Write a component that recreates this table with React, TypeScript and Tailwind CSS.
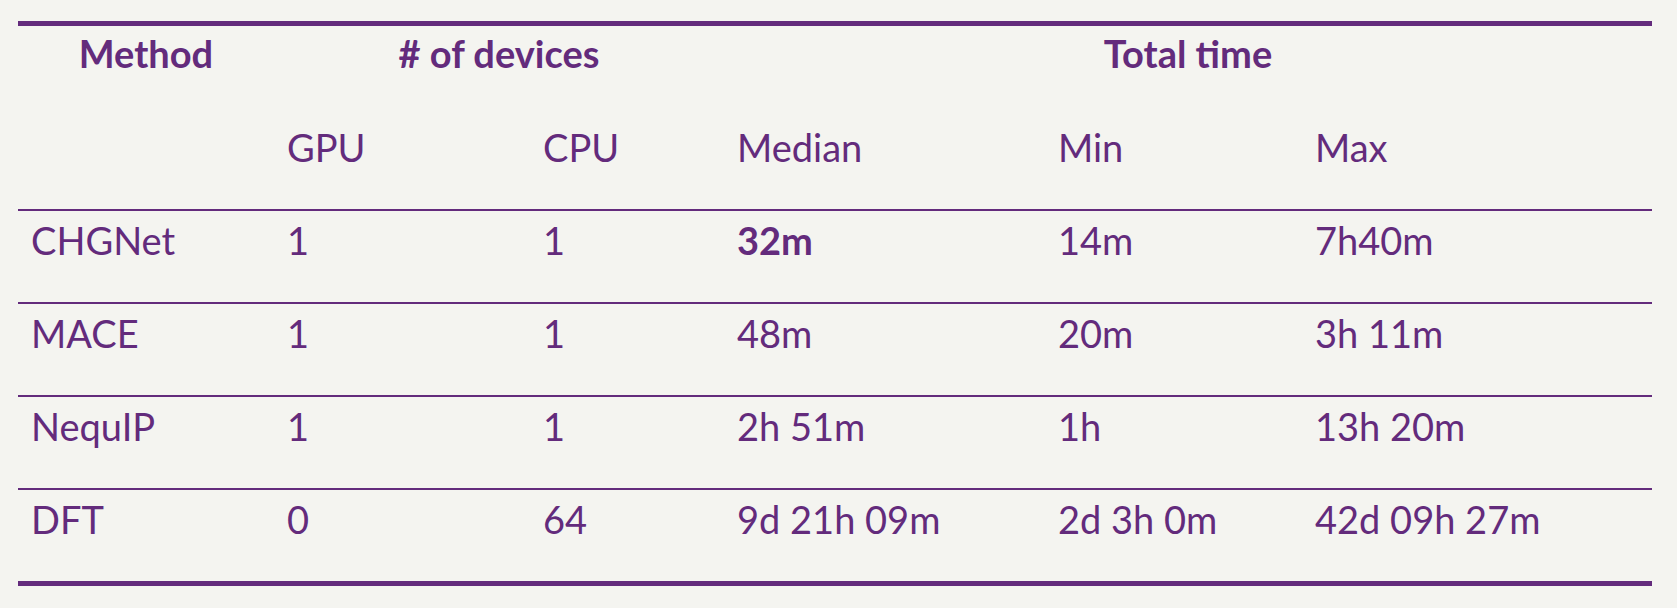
const cols = "grid grid-cols-[256px_256px_194px_321px_257px_1fr]";

type Row = { method: string; gpu: string; cpu: string; median: string; min: string; max: string; best?: boolean };

const rows: Row[] = [
  { method: "CHGNet", gpu: "1", cpu: "1", median: "32m", min: "14m", max: "7h40m", best: true },
  { method: "MACE", gpu: "1", cpu: "1", median: "48m", min: "20m", max: "3h 11m" },
  { method: "NequIP", gpu: "1", cpu: "1", median: "2h 51m", min: "1h", max: "13h 20m" },
  { method: "DFT", gpu: "0", cpu: "64", median: "9d 21h 09m", min: "2d 3h 0m", max: "42d 09h 27m" },
];

export default function App() {
  return (
    <div className="min-h-[608px] w-full bg-[#f4f4f0] pt-[21px] font-['Lato','Liberation_Sans',sans-serif] text-[38px] leading-[54px] text-[#632b7c]">
      <div className="ml-[18px] w-[1634px] border-y-[5px] border-[#632b7c]">
        {/* group headers */}
        <div className={`${cols} h-[92px] font-bold`}>
          <div className="px-[13px] text-center">Method</div>
          <div className="col-span-2 px-[13px] text-center"># of devices</div>
          <div className="col-span-3 px-[13px] text-center">Total time</div>
        </div>
        <div className={`${cols} h-[91px] pt-[2px]`}>
          <div className="px-[13px]" />
          <div className="px-[13px]">GPU</div>
          <div className="px-[13px]">CPU</div>
          <div className="px-[13px]">Median</div>
          <div className="px-[13px]">Min</div>
          <div className="px-[13px]">Max</div>
        </div>
        {rows.map((r) => (
          <div key={r.method} className={`${cols} h-[93px] border-t-2 border-[#632b7c] pt-[2px]`}>
            <div className="px-[13px]">{r.method}</div>
            <div className="px-[13px]">{r.gpu}</div>
            <div className="px-[13px]">{r.cpu}</div>
            <div className={r.best ? "px-[13px] font-bold" : "px-[13px]"}>{r.median}</div>
            <div className="px-[13px]">{r.min}</div>
            <div className="px-[13px]">{r.max}</div>
          </div>
        ))}
      </div>
    </div>
  );
}
